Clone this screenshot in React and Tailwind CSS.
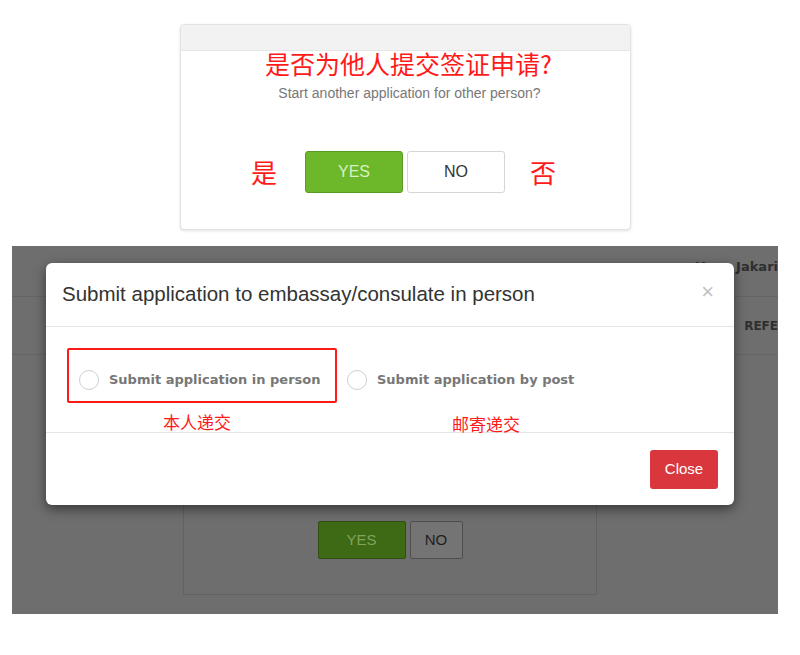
export default function App() {
  return (
    <div className="w-[800px] h-[655px] bg-white relative overflow-hidden" style={{ fontFamily: '"Liberation Sans", Arial, sans-serif' }}>
      {/* Top dialog */}
      <div className="pt-[24px] pl-[180px]">
        <div className="w-[451px] h-[206px] rounded-[4px] border border-[#e3e3e3] bg-white shadow-[0_1px_3px_rgba(0,0,0,0.12)] overflow-hidden">
          <div className="h-[26px] bg-[#f2f2f2] border-b border-[#e6e6e6]" />
          <div className="flex flex-col items-center">
            <div className="mt-[-3px] pl-[6px] text-[25px] leading-[30px] text-[#ff1a1a]" style={{ fontFamily: '"Noto Sans CJK SC", sans-serif' }}>
              是否为他人提交签证申请?
            </div>
            <div className="mt-[6px] pl-[8px] text-[14px] leading-[18px] text-[#777]">Start another application for other person?</div>
            <div className="mt-[49px] flex items-center pr-[4px]">
              <span className="text-[26px] leading-[30px] text-[#ff1a1a] mr-[28px]" style={{ fontFamily: '"Noto Sans CJK SC", sans-serif' }}>是</span>
              <button className="w-[98px] h-[42px] rounded-[3px] bg-[#6cb82a] border border-[#5a9b22] text-[16px] text-[#d9f0c4]">YES</button>
              <button className="ml-[4px] w-[98px] h-[42px] rounded-[3px] bg-white border border-[#d6d6d6] text-[16px] text-[#333]">NO</button>
              <span className="ml-[25px] text-[26px] leading-[30px] text-[#ff1a1a]" style={{ fontFamily: '"Noto Sans CJK SC", sans-serif' }}>否</span>
            </div>
          </div>
        </div>
      </div>

      {/* Bottom screenshot */}
      <div className="mt-[16px] ml-[12px] w-[766px] h-[368px] bg-[#6e6e6e] relative overflow-hidden">
        {/* dimmed background page */}
        <div className="h-[51px] border-b border-[#656565] flex justify-end items-start pt-[11px]">
          <span className="text-[13px] font-bold text-[#2e2e2e] whitespace-nowrap" style={{ fontFamily: '"DejaVu Sans", sans-serif' }}>Yuan Jakari</span>
        </div>
        <div className="h-[58px] border-b border-[#656565] flex justify-end items-center">
          <span className="text-[12px] font-bold text-[#2e2e2e]" style={{ fontFamily: '"DejaVu Sans", sans-serif' }}>REFE</span>
        </div>
        <div className="ml-[171px] mt-[150px] w-[414px] h-[90px] border border-[#626262] border-t-0 flex justify-center pt-[16px]">
          <div className="flex">
            <div className="w-[88px] h-[38px] rounded-[2px] bg-[#3f6a15] border border-[#2e4f10] flex items-center justify-center text-[15px] text-[#7fa35b]">YES</div>
            <div className="ml-[4px] w-[53px] h-[38px] rounded-[2px] bg-[#747474] border border-[#4f4f4f] flex items-center justify-center text-[15px] text-[#1e1e1e]">NO</div>
          </div>
        </div>

        {/* modal */}
        <div className="absolute left-[34px] top-[17px] w-[688px] h-[242px] bg-white rounded-[6px] shadow-[0_4px_12px_rgba(0,0,0,0.5)]">
          <div className="h-[64px] border-b border-[#e5e5e5] flex items-center justify-between pl-[16px] pr-[18px]">
            <span className="text-[20.5px] text-[#333]">
              Submit application to embassay/consulate in person
            </span>
            <span className="text-[22px] text-[#c2c2c2] leading-none mt-[-6px] mr-[2px]">×</span>
          </div>
          <div className="h-[106px] border-b border-[#e5e5e5] relative">
            <div className="flex items-center pt-[21px] pl-[21px]">
              <div className="w-[270px] h-[55px] border-2 border-[#ff1a1a] rounded-[2px] flex items-center pl-[10px] pt-[8px]">
                <span className="w-[20px] h-[20px] rounded-full border border-[#cfcfcf]" />
                <span className="ml-[10px] text-[13px] font-bold text-[#777]" style={{ fontFamily: '"DejaVu Sans", sans-serif' }}>Submit application in person</span>
              </div>
              <div className="flex items-center pt-[8px]">
                <span className="ml-[10px] w-[20px] h-[20px] rounded-full border border-[#cfcfcf]" />
                <span className="ml-[10px] text-[13px] font-bold text-[#777]" style={{ fontFamily: '"DejaVu Sans", sans-serif' }}>Submit application by post</span>
              </div>
            </div>
            <div className="flex text-[17px] leading-[20px] text-[#ff1a1a]" style={{ fontFamily: '"Noto Sans CJK SC", sans-serif' }}>
              <span className="ml-[117px] mt-[9px]">本人递交</span>
              <span className="ml-[221px] mt-[11px]">邮寄递交</span>
            </div>
          </div>
          <div className="flex justify-end pt-[17px] pr-[16px]">
            <button className="w-[68px] h-[39px] rounded-[3px] bg-[#d9363e] text-white text-[15px]">Close</button>
          </div>
        </div>
      </div>
    </div>
  )
}
